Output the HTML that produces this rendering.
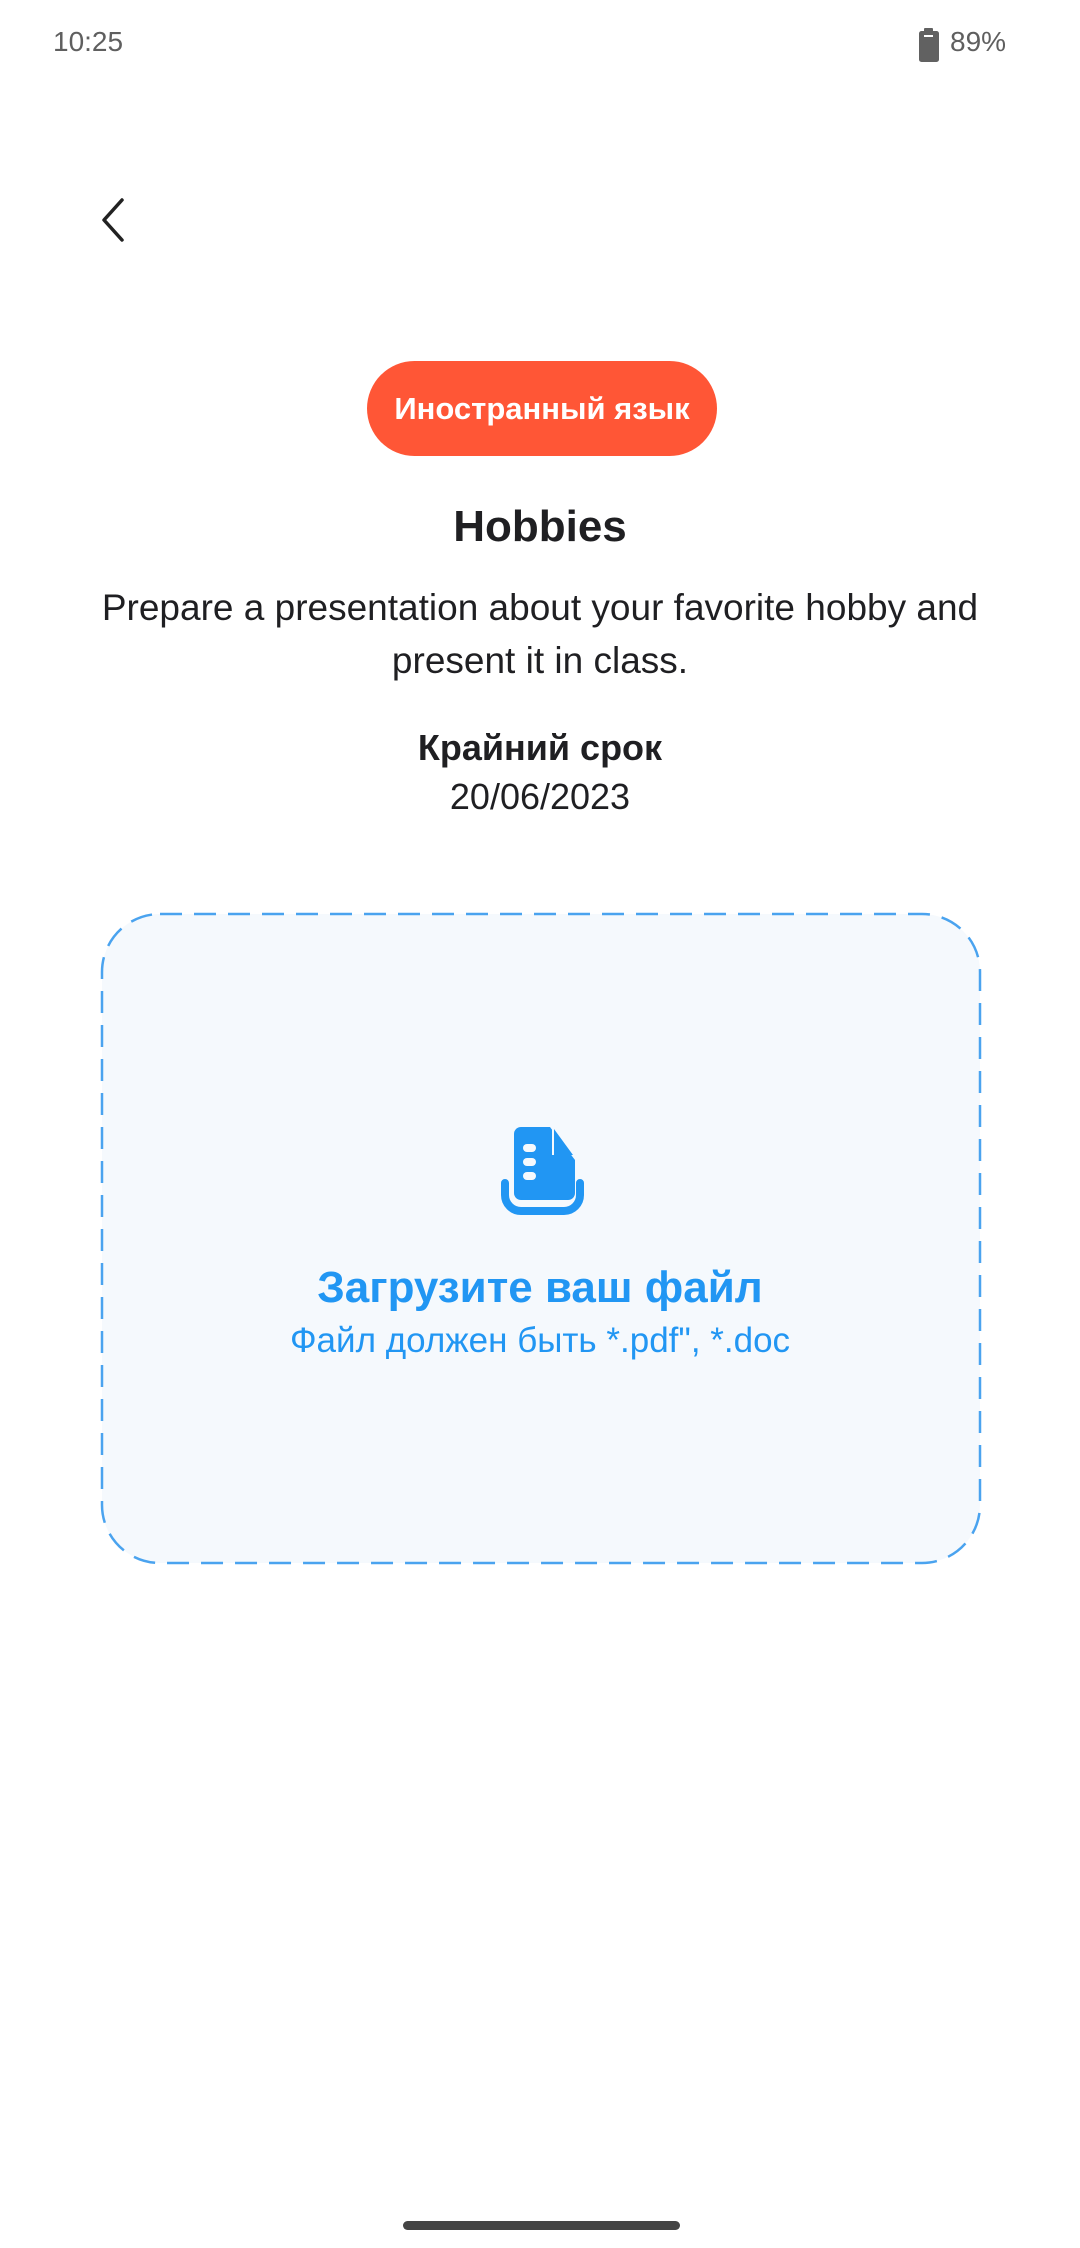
<!DOCTYPE html>
<html><head><meta charset="utf-8"><style>
*{margin:0;padding:0;box-sizing:border-box}
body{width:1080px;height:2248px;background:#fff;position:relative;overflow:hidden;font-family:"Liberation Sans","Noto Sans CJK SC",sans-serif;color:#1f1f22}
.a{position:absolute}
.c{position:absolute;left:0;width:1080px;text-align:center;white-space:nowrap}
</style></head><body>
<div class="a" style="left:53px;top:26px;font-size:28px;color:#5f5f5f">10:25</div>
<svg class="a" style="left:918px;top:28px" width="22" height="34" viewBox="0 0 22 34"><rect x="6" y="0" width="9" height="4" rx="1" fill="#616161"/><rect x="1" y="3" width="20" height="31" rx="2.5" fill="#616161"/><rect x="6" y="7" width="9" height="2" fill="#fff"/></svg>
<div class="a" style="left:950px;top:26px;font-size:28px;color:#5f5f5f">89%</div>
<svg class="a" style="left:96px;top:196px" width="34" height="50" viewBox="0 0 34 50"><path d="M26 4 L8 24 L26 44" fill="none" stroke="#222" stroke-width="3.5" stroke-linecap="round" stroke-linejoin="round"/></svg>
<div class="a" style="left:367px;top:361px;width:350px;height:95px;border-radius:48px;background:#ff5636;color:#fff;font-weight:bold;font-size:31px;line-height:95px;text-align:center">Иностранный язык</div>
<div class="c" style="top:502px;font-size:44px;font-weight:bold;color:#1f1f22">Hobbies</div>
<div class="c" style="top:581px;font-size:37px;line-height:53px;color:#1f1f22">Prepare a presentation about your favorite hobby and<br>present it in class.</div>
<div class="c" style="top:727px;font-size:36px;font-weight:bold">Крайний срок</div>
<div class="c" style="top:776px;font-size:36px">20/06/2023</div>
<svg class="a" style="left:100px;top:912px" width="884" height="662" viewBox="0 0 884 662"><rect x="2" y="2" width="878" height="649" rx="58" fill="#f5f9fd" stroke="#4aa3ef" stroke-width="2.5" stroke-dasharray="22 12"/></svg>
<svg class="a" style="left:496px;top:1125px" width="92" height="92" viewBox="0 0 92 92"><path d="M25 2 H54 L79 35 V68 a7 7 0 0 1 -7 7 H25 a7 7 0 0 1 -7 -7 V9 a7 7 0 0 1 7 -7Z" fill="#2196f3"/><path d="M56 2 V30 H79 Z" fill="#f5f9fd"/><path d="M58 4 L77 30 H58Z" fill="#2196f3"/><rect x="27" y="19" width="13" height="8" rx="4" fill="#f5f9fd"/><rect x="27" y="33" width="13" height="8" rx="4" fill="#f5f9fd"/><rect x="27" y="47" width="13" height="8" rx="4" fill="#f5f9fd"/><path d="M9 58 V70 a16 16 0 0 0 16 16 H68 a16 16 0 0 0 16 -16 V58" fill="none" stroke="#2196f3" stroke-width="8" stroke-linecap="round"/></svg>
<div class="c" style="top:1263px;font-size:44px;font-weight:bold;color:#2196f3">Загрузите ваш файл</div>
<div class="c" style="top:1321px;font-size:35px;color:#2196f3">Файл должен быть *.pdf", *.doc</div>
<div class="a" style="left:403px;top:2221px;width:277px;height:9px;border-radius:5px;background:#444"></div>
</body></html>
